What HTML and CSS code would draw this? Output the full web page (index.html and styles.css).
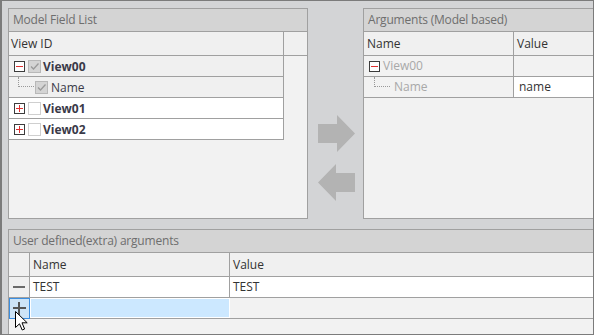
FILE: index.html
```html
<!DOCTYPE html>
<html lang="en">
<head>
  <meta charset="UTF-8" />
  <title>Arguments</title>
  <link rel="stylesheet" href="styles.css">
</head>
<body>
  <div class="window">
    <div class="top-row">
      <div class="panel field-panel">
        <div class="panel-title">Model Field List</div>
        <div class="col-head">
          <div class="head-cell view-id">View ID</div>
          <div class="head-cell filler"></div>
        </div>
        <div class="tree">
          <div class="tree-row shaded">
            <span class="expander minus"></span>
            <span class="check checked"><svg width="11" height="11" viewBox="0 0 11 11"><path d="M2 5.5 L4.5 8 L9.5 2.5" fill="none" stroke="#9a9a9a" stroke-width="1.3"/></svg></span>
            <span class="label bold">View00</span>
          </div>
          <div class="tree-row shaded child">
            <span class="connector"></span>
            <span class="check checked"><svg width="11" height="11" viewBox="0 0 11 11"><path d="M2 5.5 L4.5 8 L9.5 2.5" fill="none" stroke="#9a9a9a" stroke-width="1.3"/></svg></span>
            <span class="label">Name</span>
          </div>
          <div class="tree-row">
            <span class="expander plus"></span>
            <span class="check"></span>
            <span class="label bold">View01</span>
          </div>
          <div class="tree-row">
            <span class="expander plus"></span>
            <span class="check"></span>
            <span class="label bold">View02</span>
          </div>
        </div>
      </div>

      <div class="move-buttons">
        <svg width="37" height="37" viewBox="0 0 37 37"><path d="M0 9 H19 V0 L37 18.5 L19 37 V28 H0 Z" fill="#b3b3b3"/></svg>
        <svg width="37" height="37" viewBox="0 0 37 37"><path d="M37 9 H18 V0 L0 18.5 L18 37 V28 H37 Z" fill="#b3b3b3"/></svg>
      </div>

      <div class="panel args-panel">
        <div class="panel-title">Arguments (Model based)</div>
        <div class="col-head">
          <div class="head-cell arg-name">Name</div>
          <div class="head-cell arg-value">Value</div>
        </div>
        <div class="arg-row">
          <div class="cell arg-name muted"><span class="expander minus"></span>View00</div>
          <div class="cell arg-value"></div>
        </div>
        <div class="arg-row">
          <div class="cell arg-name muted child"><span class="connector"></span>Name</div>
          <div class="cell arg-value white">name</div>
        </div>
      </div>
    </div>

    <div class="panel extra-panel">
      <div class="panel-title">User defined(extra) arguments</div>
      <div class="col-head">
        <div class="head-cell row-head"></div>
        <div class="head-cell extra-name">Name</div>
        <div class="head-cell extra-value">Value</div>
      </div>
      <div class="extra-row white">
        <div class="cell row-head"><span class="dash"></span></div>
        <div class="cell extra-name">TEST</div>
        <div class="cell extra-value">TEST</div>
      </div>
      <div class="extra-row new-row">
        <div class="cell row-head active"><span class="plus-sign"></span></div>
        <div class="cell extra-name editing"></div>
        <div class="cell extra-value"></div>
      </div>
    </div>

    <svg class="cursor" width="13" height="20" viewBox="0 0 13 20">
      <path d="M0.5 0.5 V16.5 L4.5 12.8 L7.2 19 L9.6 18 L7 11.8 L12.2 11.8 Z" fill="#fff" stroke="#000" stroke-width="1" stroke-linejoin="miter"/>
    </svg>
  </div>
</body>
</html>
```

FILE: styles.css
```css
body {
  margin: 0;
  font-family: "Open Sans", "Noto Sans", sans-serif;
  font-size: 12px;
  color: #333;
}
.window {
  position: relative;
  width: 594px;
  height: 335px;
  box-sizing: border-box;
  border-left: 2px solid #7b7b7b;
  border-top: 1px solid #7b7b7b;
  border-right: 1px solid #7b7b7b;
  border-bottom: 1px solid #7b7b7b;
  background: #d3d4d6;
  padding: 7px 0 0 6px;
  overflow: hidden;
  display: flex;
  flex-direction: column;
}
.top-row {
  display: flex;
  height: 211px;
  margin-bottom: 10px;
}
.panel {
  border: 1px solid #a0a0a0;
  background: #f2f2f2;
  box-sizing: border-box;
}
.panel-title {
  height: 22px;
  line-height: 22px;
  padding-left: 4px;
  background: #d4d4d4;
  color: #6e6e6e;
  border-bottom: 1px solid #a0a0a0;
  letter-spacing: -0.2px;
}
.field-panel {
  width: 300px;
}
.args-panel {
  flex: 1;
  border-right: none;
}
.extra-panel {
  flex: 1;
  border-right: none;
  border-bottom: none;
}
.col-head {
  display: flex;
  height: 23px;
  border-bottom: 1px solid #a0a0a0;
  background: #f0f0f0;
}
.head-cell, .cell {
  box-sizing: border-box;
  padding-left: 3px;
  line-height: 20px;
  white-space: nowrap;
}
.head-cell {
  line-height: 23px;
  border-right: 1px solid #a0a0a0;
}
.view-id {
  width: 275px;
  padding-left: 2px;
}
.filler {
  flex: 1;
  border-right: none;
}

/* tree */
.tree {
  width: 275px;
}
.tree-row {
  display: flex;
  align-items: center;
  height: 20px;
  border-bottom: 1px solid #a0a0a0;
  border-right: 1px solid #a0a0a0;
  background: #fff;
  padding-left: 5px;
}
.tree-row.shaded {
  background: #f0f0f0;
}
.expander {
  position: relative;
  display: inline-block;
  width: 9px;
  height: 9px;
  border: 1px solid #3c3c3c;
  background: #fff;
  flex: none;
}
.expander::before {
  content: "";
  position: absolute;
  left: 1px;
  top: 4px;
  width: 7px;
  height: 1px;
  background: #e03030;
}
.expander.plus::after {
  content: "";
  position: absolute;
  left: 4px;
  top: 1px;
  width: 1px;
  height: 7px;
  background: #e03030;
}
.check {
  display: inline-flex;
  align-items: center;
  justify-content: center;
  width: 11px;
  height: 11px;
  margin-left: 3px;
  border: 1px solid #cfcfcf;
  background: #fff;
  flex: none;
}
.check.checked {
  background: #d4d4d4;
  border-color: #b8b8b8;
}
.label {
  margin-left: 2px;
  color: #3a3a48;
}
.bold {
  font-weight: bold;
}
.connector {
  display: inline-block;
  width: 16px;
  height: 10px;
  margin-left: 4px;
  margin-top: -10px;
  border-left: 1px dotted #999;
  border-bottom: 1px dotted #999;
  box-sizing: border-box;
  flex: none;
}
.tree-row.child .check {
  margin-left: 1px;
}
.tree-row.child .label {
  margin-left: 3px;
}

/* model based arguments */
.arg-row {
  display: flex;
  height: 20px;
  border-bottom: 1px solid #a0a0a0;
}
.arg-name {
  width: 150px;
  border-right: 1px solid #a0a0a0;
}
.arg-value {
  flex: 1;
  border-right: none;
}
.cell.arg-name {
  display: flex;
  align-items: center;
  padding-left: 5px;
}
.cell.arg-name .expander {
  margin-right: 3px;
}
.cell.arg-name.child .connector {
  margin-left: 5px;
  margin-right: 4px;
}
.muted {
  color: #a8a8a8;
}
.cell.arg-value {
  padding-left: 5px;
}
.white {
  background: #fff;
}

/* move buttons */
.move-buttons {
  width: 55px;
  display: flex;
  flex-direction: column;
  align-items: center;
  gap: 12px;
  padding-top: 107px;
  box-sizing: border-box;
}
.move-buttons svg {
  display: block;
  margin-left: 1px;
}

/* extra arguments */
.row-head {
  width: 21px;
  border-right: 1px solid #a0a0a0;
}
.extra-name {
  width: 200px;
  border-right: 1px solid #a0a0a0;
}
.extra-value {
  flex: 1;
  border-right: none;
}
.extra-row {
  display: flex;
  height: 20px;
  border-bottom: 1px solid #a0a0a0;
}
.extra-row.white .cell {
  background: #fff;
}
.extra-row.white .row-head {
  background: #f0f0f0;
}
.cell.row-head {
  position: relative;
  padding: 0;
}
.dash {
  position: absolute;
  left: 4px;
  top: 9px;
  width: 12px;
  height: 2px;
  background: #6a6a6a;
}
.row-head.active {
  background: #cde4f7;
  border: 1px solid #3c8ee0;
  height: 21px;
}
.plus-sign::before, .plus-sign::after {
  content: "";
  position: absolute;
  background: #555;
}
.plus-sign::before {
  left: 3px;
  top: 8px;
  width: 13px;
  height: 2px;
}
.plus-sign::after {
  left: 8px;
  top: 3px;
  width: 2px;
  height: 13px;
}
.editing {
  background: #cce8ff;
  border: 1px solid #fff;
}
.cursor {
  position: absolute;
  left: 13px;
  top: 310px;
}
```
